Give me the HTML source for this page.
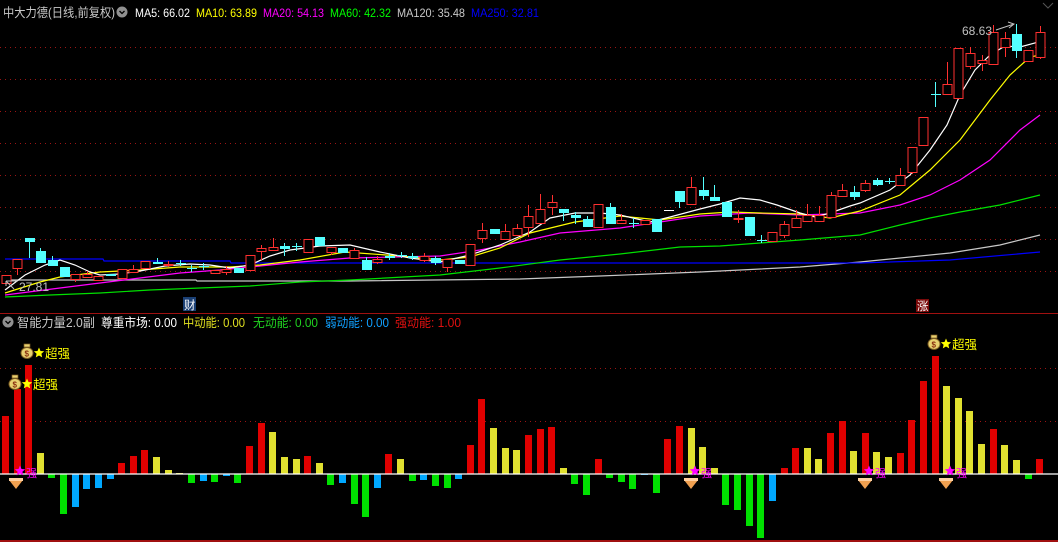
<!DOCTYPE html>
<html><head><meta charset="utf-8"><style>
html,body{margin:0;padding:0;background:#000;width:1058px;height:542px;overflow:hidden}
svg{display:block}
text{font-family:"Liberation Sans","Noto Sans CJK SC",sans-serif}
</style></head><body>
<svg id="s" width="1058" height="542" xmlns="http://www.w3.org/2000/svg">
<rect width="1058" height="542" fill="#000"/>
<g id="grid" stroke="#9a1414" stroke-width="1" stroke-dasharray="1,4"></g>
<line x1="0" y1="313.5" x2="1058" y2="313.5" stroke="#a01010"/>
<line x1="0" y1="541" x2="1058" y2="541" stroke="#a01010" stroke-width="2"/>
<g id="lines" fill="none" stroke-width="1.2"></g>
<g id="candles"></g>
<g id="bars"></g>
<line x1="0" y1="474" x2="1058" y2="474" stroke="#fff" stroke-width="1.3"/>
<g id="marks"></g>
<!-- header -->
<text x="3" y="17" font-size="12.5" fill="#c8c8c8" textLength="112" lengthAdjust="spacingAndGlyphs">中大力德(日线,前复权)</text>
<circle cx="122" cy="12" r="5.5" fill="#909090"/><path d="M119.5 11l2.5 2.5 2.5-2.5" stroke="#000" stroke-width="1.3" fill="none"/>
<text x="135" y="17" font-size="12" fill="#fff" textLength="55" lengthAdjust="spacingAndGlyphs">MA5: 66.02</text>
<text x="196" y="17" font-size="12" fill="#ffff00" textLength="61" lengthAdjust="spacingAndGlyphs">MA10: 63.89</text>
<text x="263" y="17" font-size="12" fill="#ff00ff" textLength="61" lengthAdjust="spacingAndGlyphs">MA20: 54.13</text>
<text x="330" y="17" font-size="12" fill="#00ff00" textLength="61" lengthAdjust="spacingAndGlyphs">MA60: 42.32</text>
<text x="397" y="17" font-size="12" fill="#c8c8c8" textLength="68" lengthAdjust="spacingAndGlyphs">MA120: 35.48</text>
<text x="471" y="17" font-size="12" fill="#0000ff" textLength="68" lengthAdjust="spacingAndGlyphs">MA250: 32.81</text>
<path d="M1043 3l5 5 5-5" stroke="#555" fill="none"/>
<text x="962" y="35" font-size="12" fill="#c0c0c0">68.63</text>
<path d="M996 30 L1014 24 M1008 22 l6 2 -5 4" stroke="#c0c0c0" fill="none"/>
<text x="19" y="291" font-size="12" fill="#c0c0c0">27.81</text>
<path d="M6 281 L18 281 M6 281 L14 289 M6 281 v5" stroke="#c0c0c0" fill="none"/>
<rect x="183" y="297" width="13" height="14" fill="#1a3f73"/>
<text x="184" y="309" font-size="11.5" fill="#fff">财</text>
<rect x="916" y="299" width="13" height="13" fill="#7a0a0a"/>
<text x="917" y="310" font-size="11.5" fill="#fff">涨</text>
<circle cx="8" cy="322" r="5.5" fill="#909090"/><path d="M5.5 321l2.5 2.5 2.5-2.5" stroke="#000" stroke-width="1.3" fill="none"/>
<text x="17" y="327" font-size="12.5" fill="#c8c8c8" textLength="78" lengthAdjust="spacingAndGlyphs">智能力量2.0副</text>
<text x="101" y="327" font-size="12.5" fill="#fff" textLength="76" lengthAdjust="spacingAndGlyphs">尊重市场: 0.00</text>
<text x="183" y="327" font-size="12.5" fill="#e0e020" textLength="62" lengthAdjust="spacingAndGlyphs">中动能: 0.00</text>
<text x="253" y="327" font-size="12.5" fill="#20d020" textLength="65" lengthAdjust="spacingAndGlyphs">无动能: 0.00</text>
<text x="325" y="327" font-size="12.5" fill="#10a0ff" textLength="64" lengthAdjust="spacingAndGlyphs">弱动能: 0.00</text>
<text x="395" y="327" font-size="12.5" fill="#e01010" textLength="66" lengthAdjust="spacingAndGlyphs">强动能: 1.00</text>
</svg>
<script>
var NS="http://www.w3.org/2000/svg";
function el(p,t,a){var e=document.createElementNS(NS,t);for(var k in a)e.setAttribute(k,a[k]);document.getElementById(p).appendChild(e);return e;}
[47,79,111,143,175,207,239,271,368,421].forEach(function(y){el("grid","line",{x1:0,y1:y+.5,x2:1058,y2:y+.5});});
function pl(c,pts){el("lines","polyline",{stroke:c,points:pts.map(function(p){return p.join(",")}).join(" ")});}
pl("#c8c8c8",[[5,280],[196,280],[197,281],[350,281],[520,279],[600,276],[700,272],[800,267],[860,262],[950,253],[1000,245],[1040,235]]);
pl("#0000ff",[[5,259],[103,259],[104,261],[230,261],[231,263],[860,263],[950,260],[1040,252]]);
pl("#00e000",[[5,297],[50,295],[100,293],[150,290],[200,288],[250,286],[300,282],[350,280],[440,275],[500,268],[560,260],[620,254],[680,247],[720,246],[760,243],[800,240],[860,235],[900,225],[930,218],[960,212],[1000,205],[1040,195]]);
pl("#ff00ff",[[5,295],[60,288],[100,283],[140,278],[180,273],[220,270],[260,266],[300,262],[350,258],[440,256],[480,250],[520,242],[560,233],[620,228],[660,222],[700,216],[750,213],[800,215],[860,213],[900,205],[930,195],[960,180],[990,160],[1020,130],[1040,115]]);
pl("#ffff00",[[5,293],[40,282],[60,277],[100,272],[140,270],[180,267],[230,267],[260,265],[300,260],[345,252],[400,256],[440,260],[470,257],[500,248],[530,233],[575,222],[620,216],[660,220],[700,214],[730,212],[760,213],[800,214],[830,218],[860,211],[900,195],[930,170],[960,140],[990,100],[1010,75],[1030,57],[1040,55]]);
pl("#ffffff",[[5,290],[25,275],[45,265],[60,260],[75,265],[90,272],[100,275],[120,274],[140,271],[165,266],[190,264],[210,265],[230,268],[250,265],[270,256],[290,250],[320,246],[350,245],[380,252],[410,258],[440,262],[470,255],[500,245],[530,232],[550,218],[575,213],[600,213],[620,215],[650,222],[670,217],[700,209],[720,204],[740,198],[760,200],[777,205],[800,213],[815,217],[830,213],[850,206],[860,203],[890,190],[910,175],[930,150],[947,125],[960,95],[975,70],[990,55],[1005,46],[1020,47],[1035,43],[1040,40]]);
var C=[["r",275,283,275,283],["r",259,268,259,275],["c",238,242,238,258],["c",251,263,248,263],["c",260,266,256,266],["c",267,277,267,277],["r",274,279,274,282],["r",274,277,271,277],["r",276,280,276,280],["c",274,276,274,276],
["r",269,278,269,278],["r",269,272,265,272],["r",261,268,261,268],["c",262,264,258,264],["r",264,265,261,267],["c",263,264,260,266],["c",268,269,265,272],["c",266,267,263,270],["r",270,273,270,273],["r",269,272,266,275],
["c",268,273,268,273],["r",255,270,255,270],["r",248,251,245,260],["r",247,250,238,250],["c",246,249,243,256],["c",246,247,243,251],["r",239,252,239,252],["c",237,246,237,246],["r",247,252,247,255],["c",248,253,248,253],
["r",250,258,248,258],["c",260,270,257,270],["r",259,262,256,264],["c",256,258,253,260],["c",255,256,252,258],["c",256,258,253,260],["r",256,260,253,262],["c",258,263,256,265],["r",259,267,259,272],["c",260,264,260,264],
["r",244,265,244,265],["r",230,238,223,243],["c",229,234,229,234],["r",231,239,224,239],["r",228,235,224,236],["r",216,227,205,237],["r",209,223,194,223],["r",202,207,195,215],["c",209,213,209,221],["c",215,218,212,224],
["c",219,227,216,227],["r",204,227,204,227],["c",207,224,203,224],["r",220,223,214,223],["c",223,224,218,228],["r",220,224,220,224],["c",219,232,219,232],["w",210,211,210,211],["c",191,202,191,208],["r",187,204,177,205],
["c",190,196,177,200],["c",197,201,185,201],["c",202,217,202,217],["r",218,219,210,223],["c",217,236,217,236],["c",240,241,235,243],["r",232,241,232,241],["r",224,235,221,238],["r",218,227,210,227],["r",215,221,204,221],
["r",215,221,206,221],["r",195,217,192,217],["r",190,196,184,196],["c",192,197,186,200],["r",183,190,180,192],["c",180,185,178,186],["c",181,182,178,184],["r",175,185,168,185],["r",147,172,147,174],["r",117,145,117,145],
["c",94,95,82,107],["r",84,94,62,94],["r",48,98,48,98],["r",53,66,47,69],["r",60,63,55,71],["r",32,64,25,65],["r",38,47,32,57],["c",34,51,24,58],["r",50,61,50,61],["r",32,57,26,59]];
C.forEach(function(c,i){var cx=Math.round(5.5+i*11.62)+.5,x=cx-4.5,col=c[0]=="r"?"#ff3030":(c[0]=="c"?"#54ffff":"#ffffff");
 el("candles","line",{x1:cx,y1:c[3],x2:cx,y2:c[4],stroke:col});
 var h=Math.max(c[2]-c[1],1);
 if(c[0]=="r")el("candles","rect",{x:x,y:c[1]+.5,width:9,height:h,fill:"#000",stroke:col});
 else el("candles","rect",{x:x,y:c[1],width:10,height:h,fill:col});});
var B="r58 r85 r109 y21 g-4 g-40 b-33 b-15 b-14 b-5 r11 r18 r24 y17 y4 y1 g-9 b-7 g-8 b-2 g-9 r28 r51 y42 y17 y15 r18 y11 g-11 b-9 g-30 g-43 b-14 r20 y15 g-7 b-6 g-12 g-14 b-5 r29 r75 y46 y26 y24 r39 r45 r47 y6 g-10 g-21 r15 g-4 g-8 g-15 b-1 g-19 r35 r48 y46 y27 y6 g-31 g-36 g-52 g-64 b-27 r6 r26 y26 y15 r41 r53 y23 r41 y22 y17 r21 r54 r93 r118 y88 y76 y63 y30 r45 y29 y14 g-5 r15".split(" ");
var col={r:"#e00000",y:"#e0e030",g:"#00e000",b:"#00a8ff"};
B.forEach(function(b,i){var v=+b.slice(1),x=Math.round(2+i*11.62);
 el("bars","rect",{x:x,y:v>0?474-v:474,width:7,height:Math.abs(v),fill:col[b[0]]});});
function star(x,y,r,c){var p=[];for(var k=0;k<10;k++){var a=-Math.PI/2+k*Math.PI/5,rr=k%2?r*0.45:r;p.push((x+rr*Math.cos(a)).toFixed(1)+","+(y+rr*Math.sin(a)).toFixed(1));}el("marks","polygon",{points:p.join(" "),fill:c});}
function bag(x,y){el("marks","ellipse",{cx:x+6,cy:y+9,rx:6,ry:5.5,fill:"#e8d070",stroke:"#7a5a20"});el("marks","rect",{x:x+3,y:y,width:6,height:3,fill:"#e8d070",stroke:"#7a5a20","stroke-width":.7});
 var t=el("marks","text",{x:x+3.5,y:y+12.5,"font-size":"8","fill":"#8a3010","font-weight":"bold"});t.textContent="$";}
function lab(x,y){bag(x,y);star(x+18,y+9,5.5,"#ffff00");var t=el("marks","text",{x:x+24,y:y+14,"font-size":"12.5",fill:"#ffff00"});t.textContent="超强";}
lab(9,375);lab(21,344);lab(928,335);
function dia(cx){el("marks","polygon",{points:(cx-7)+",480 "+(cx+7)+",480 "+cx+",489",fill:"#f0a050"});el("marks","rect",{x:cx-7,y:478,width:14,height:3,fill:"#ffd0a0"});
 star(cx+4,471,5.5,"#ff00ff");var t=el("marks","text",{x:cx+10,y:477,"font-size":"11",fill:"#ff00ff"});t.textContent="强";}
[16,691,865,946].forEach(dia);
</script>
</body></html>
